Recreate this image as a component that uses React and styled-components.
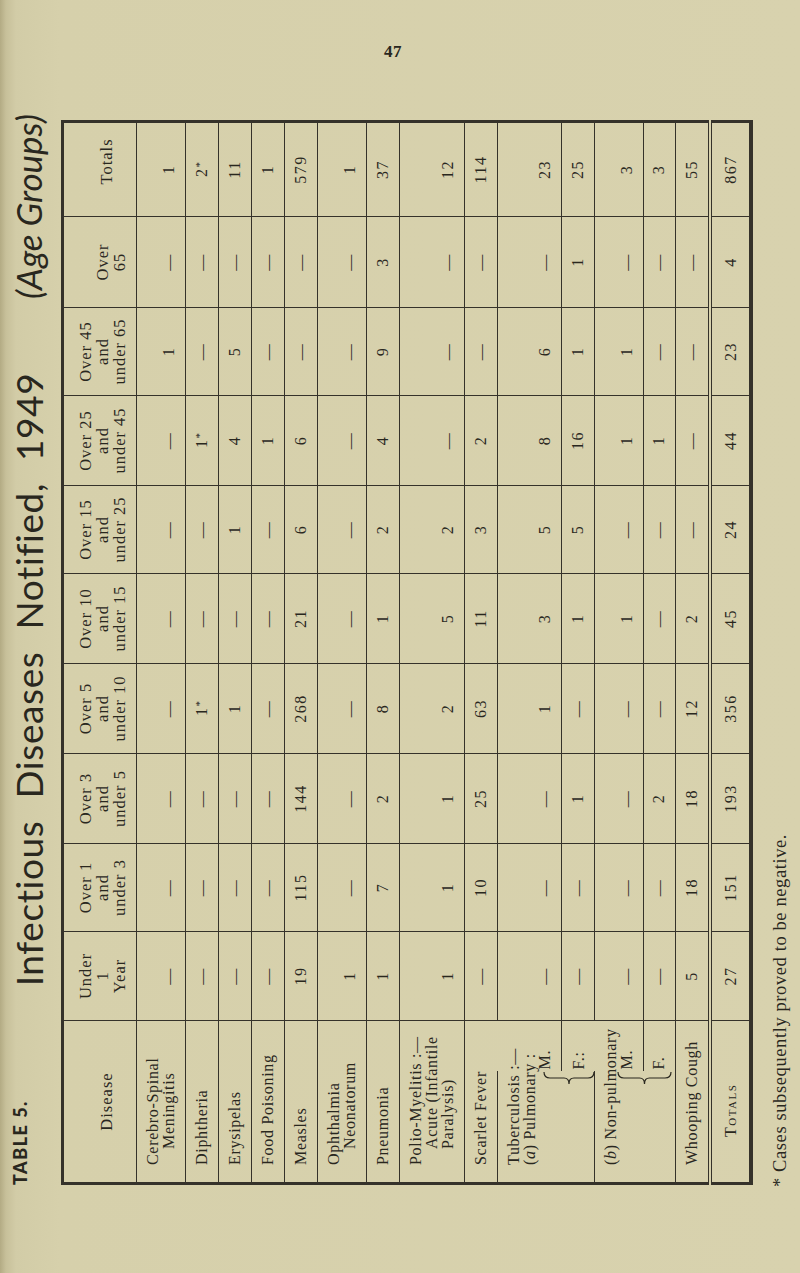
import React from 'react';
import styled, { createGlobalStyle } from 'styled-components';

const INK = '#29271e';
const RULE = '#35322a';

const GlobalStyle = createGlobalStyle`
  html, body { margin: 0; padding: 0; background: #d6d0ac; }
  body { width: 800px; height: 1273px; overflow: hidden; }
`;

const Page = styled.div`
  width: 800px;
  height: 1273px;
  overflow: hidden;
  display: flex;
  flex-direction: column;
  background: linear-gradient(90deg, #b3ab84 0px, #c7c09a 6px, #d2cca7 16px, #d6d0ab 60px, #d8d2ae 100%);
  color: ${INK};
  font-family: "Liberation Serif", "Times New Roman", serif;
`;

const Folio = styled.header`
  flex: none;
  height: 100px;
  box-sizing: border-box;
  padding: 43px 14px 0 0;
  text-align: center;
  font-weight: 700;
  font-size: 17px;
  line-height: 18px;
  letter-spacing: 0.5px;
`;

const Turn = styled.div`
  flex: none;
  width: 800px;
  height: 1173px;
`;

const Sheet = styled.div`
  width: 1173px;
  height: 800px;
  box-sizing: border-box;
  padding-left: 88px;
  display: flex;
  flex-direction: column;
  transform-origin: 0 0;
  transform: translateY(1173px) rotate(-90deg);
`;

const TitleRow = styled.div`
  height: 61px;
  box-sizing: border-box;
  padding-right: 14px;
  display: flex;
  align-items: flex-start;
`;

const TableNo = styled.span`
  margin-top: 11px;
  line-height: 18px;
  font-family: Lato, "Liberation Sans", sans-serif;
  font-weight: 900;
  font-size: 18px;
  letter-spacing: 1.5px;
  margin-right: 40px;
`;

const TitleMain = styled.span`
  flex: 1;
  margin-top: 10px;
  line-height: 37px;
  text-align: center;
  font-family: Lato, "Open Sans", sans-serif;
  font-weight: 400;
  font-size: 37px;
  letter-spacing: 0.6px;
  word-spacing: 12px;
`;

const AgeGroups = styled.span`
  margin-top: 10px;
  line-height: 37px;
  font-family: Lato, "Open Sans", sans-serif;
  font-style: italic;
  font-size: 35px;
`;

const Table = styled.table`
  width: 1062px;
  table-layout: fixed;
  border-collapse: collapse;
  border-top: 3px solid ${RULE};
  border-left: 3px solid ${RULE};
  border-right: 3px solid ${RULE};
  border-bottom: 4px solid ${RULE};
  font-size: 16px;
  line-height: 16px;
`;

const Row = styled.tr`
  height: ${p => p.$h}px;
  ${p => p.$total && `border-top: 4px double ${RULE};`}
`;

const HeadCell = styled.th`
  font-weight: 400;
  font-size: 16.5px;
  text-align: center;
  vertical-align: ${p => (p.$mid ? 'middle' : 'bottom')};
  padding: ${p => (p.$mid ? `12px 2px 0 ${p.$shift || 2}px` : '0 2px 8px')};
  line-height: 17px;
  letter-spacing: 1px;
  border-left: 1.5px solid ${RULE};
  border-bottom: 1px solid ${RULE};
`;

const NameCell = styled.td`
  position: relative;
  vertical-align: ${p => (p.$mid ? 'middle' : 'top')};
  padding: ${p => (p.$mid ? '0 0 0 45px' : '8px 0 8px 17px')};
  border-top: 1px solid ${RULE};
  letter-spacing: 0.7px;
  white-space: nowrap;
`;

const SubCell = styled.td`
  vertical-align: bottom;
  padding: 0 0 8px ${p => p.$pl || 2}px;
  border-top: ${p => (p.$ruled ? `1px solid ${RULE}` : 'none')};
  letter-spacing: 0.7px;
  white-space: nowrap;
`;

const Line = styled.span`
  display: block;
  padding-left: ${p => (p.$indent ? 16 : 0)}px;
`;

const SmallCaps = styled.span`
  font-variant: small-caps;
  letter-spacing: 1.5px;
`;

const Num = styled.td`
  text-align: center;
  vertical-align: ${p => (p.$mid ? 'middle' : 'bottom')};
  padding: ${p => (p.$mid ? '0 2px' : '0 2px 8px')};
  border-top: 1px solid ${RULE};
  border-left: 1.5px solid ${RULE};
  letter-spacing: 1.5px;
  white-space: nowrap;
`;

const Star = styled.span`
  font-size: 11px;
  vertical-align: 4px;
  letter-spacing: 0;
`;

const BraceSlot = styled.span`
  position: absolute;
  right: ${p => p.$r}px;
  top: ${p => p.$t}px;
  display: block;
`;

const Footnote = styled.p`
  margin: 18px 0 0 -2px;
  font-size: 18.5px;
  line-height: 19px;
  letter-spacing: 0.6px;
`;

const Brace = ({ h, w = 14 }) => {
  const m = w / 2;
  const c = h / 2;
  return (
    <svg width={w} height={h} viewBox={`0 0 ${w} ${h}`}>
      <path
        d={`M ${w - 1} 1 Q ${m} 1 ${m} 7 L ${m} ${c - 5} Q ${m} ${c} 1 ${c} Q ${m} ${c} ${m} ${c + 5} L ${m} ${h - 7} Q ${m} ${h - 1} ${w - 1} ${h - 1}`}
        fill="none"
        stroke={INK}
        strokeWidth="1.2"
      />
    </svg>
  );
};

const ages = [
  ['Under', '1', 'Year'],
  ['Over 1', 'and', 'under 3'],
  ['Over 3', 'and', 'under 5'],
  ['Over 5', 'and', 'under 10'],
  ['Over 10', 'and', 'under 15'],
  ['Over 15', 'and', 'under 25'],
  ['Over 25', 'and', 'under 45'],
  ['Over 45', 'and', 'under 65'],
  ['Over', '65'],
];
const widths = [89, 88, 90, 90, 90, 88, 90, 88, 91, 95];

const D = '—';
const rows = [
  { h: 48, name: ['Cerebro-Spinal', 'Meningitis'], v: [D, D, D, D, D, D, D, '1', D, '1'] },
  { h: 33, name: ['Diphtheria'], v: [D, D, D, '1*', D, D, '1*', D, D, '2*'] },
  { h: 32, name: ['Erysipelas'], v: [D, D, D, '1', D, '1', '4', '5', D, '11'] },
  { h: 32, name: ['Food  Poisoning'], v: [D, D, D, D, D, D, '1', D, D, '1'] },
  { h: 32, name: ['Measles'], v: ['19', '115', '144', '268', '21', '6', '6', D, D, '579'] },
  { h: 49, name: ['Ophthalmia', 'Neonatorum'], v: ['1', D, D, D, D, D, D, D, D, '1'] },
  { h: 32, name: ['Pneumonia'], v: ['1', '7', '2', '8', '1', '2', '4', '9', '3', '37'] },
  { h: 65, name: ['Polio-Myelitis :—', 'Acute (Infantile', 'Paralysis)'], v: ['1', '1', '1', '2', '5', '2', D, D, D, '12'] },
  { h: 32, name: ['Scarlet Fever'], v: [D, '10', '25', '63', '11', '3', '2', D, D, '114'] },
  { h: 64, tb: 'a', v: [D, D, D, '1', '3', '5', '8', '6', D, '23'] },
  { h: 33, tb: 'aF', v: [D, D, '1', D, '1', '5', '16', '1', '1', '25'] },
  { h: 49, tb: 'b', v: [D, D, D, D, '1', D, '1', '1', D, '3'] },
  { h: 32, tb: 'bF', v: [D, D, '2', D, D, D, '1', D, D, '3'] },
  { h: 32, name: ['Whooping Cough'], v: ['5', '18', '18', '12', '2', D, D, D, D, '55'] },
];
const totals = ['27', '151', '193', '356', '45', '24', '44', '23', '4', '867'];

const Value = ({ t }) =>
  t.endsWith('*') ? (
    <>
      {t.slice(0, -1)}
      <Star>*</Star>
    </>
  ) : (
    t
  );

const NameLines = ({ lines }) =>
  lines.map((l, i) => (
    <Line key={i} $indent={i > 0}>
      {l}
    </Line>
  ));

function DiseaseCells({ r }) {
  if (r.tb === 'a')
    return (
      <>
        <NameCell rowSpan={2}>
          <Line>Tuberculosis :—</Line>
          <Line>
            (<i>a</i>) Pulmonary :
          </Line>
          <BraceSlot $r={0} $t={45}>
            <Brace h={52} />
          </BraceSlot>
        </NameCell>
        <SubCell $pl={2}>M.</SubCell>
      </>
    );
  if (r.tb === 'aF') return <SubCell $ruled $pl={2}>F.:</SubCell>;
  if (r.tb === 'b')
    return (
      <>
        <NameCell rowSpan={2}>
          <Line>
            (<i>b</i>) Non-pulmonary
          </Line>
          <BraceSlot $r={0} $t={22}>
            <Brace h={55} />
          </BraceSlot>
        </NameCell>
        <SubCell $pl={2}>M.</SubCell>
      </>
    );
  if (r.tb === 'bF') return <SubCell $ruled $pl={2}>F.</SubCell>;
  return (
    <NameCell colSpan={2}>
      <NameLines lines={r.name} />
    </NameCell>
  );
}

export default function App() {
  return (
    <Page>
      <GlobalStyle />
      <Folio>47</Folio>
      <Turn>
        <Sheet>
          <TitleRow>
            <TableNo>TABLE 5.</TableNo>
            <TitleMain>Infectious Diseases Notified, 1949</TitleMain>
            <AgeGroups>(Age Groups)</AgeGroups>
          </TitleRow>
          <Table>
            <colgroup>
              <col style={{ width: 112 }} />
              <col style={{ width: 51 }} />
              {widths.map((w, i) => (
                <col key={i} style={{ width: w }} />
              ))}
            </colgroup>
            <tbody>
              <Row $h={74}>
                <HeadCell colSpan={2} $mid>
                  Disease
                </HeadCell>
                {ages.map((a, i) => (
                  <HeadCell key={i}>
                    {a.map((l, j) => (
                      <Line key={j}>{l}</Line>
                    ))}
                  </HeadCell>
                ))}
                <HeadCell $mid $shift={18}>
                  Totals
                </HeadCell>
              </Row>
              {rows.map((r, i) => (
                <Row key={i} $h={r.h}>
                  <DiseaseCells r={r} />
                  {r.v.map((t, j) => (
                    <Num key={j}>
                      <Value t={t} />
                    </Num>
                  ))}
                </Row>
              ))}
              <Row $h={41} $total>
                <NameCell colSpan={2} $mid>
                  <SmallCaps>Totals</SmallCaps>
                </NameCell>
                {totals.map((t, j) => (
                  <Num key={j} $mid>
                    {t}
                  </Num>
                ))}
              </Row>
            </tbody>
          </Table>
          <Footnote>* Cases subsequently proved to be negative.</Footnote>
        </Sheet>
      </Turn>
    </Page>
  );
}
